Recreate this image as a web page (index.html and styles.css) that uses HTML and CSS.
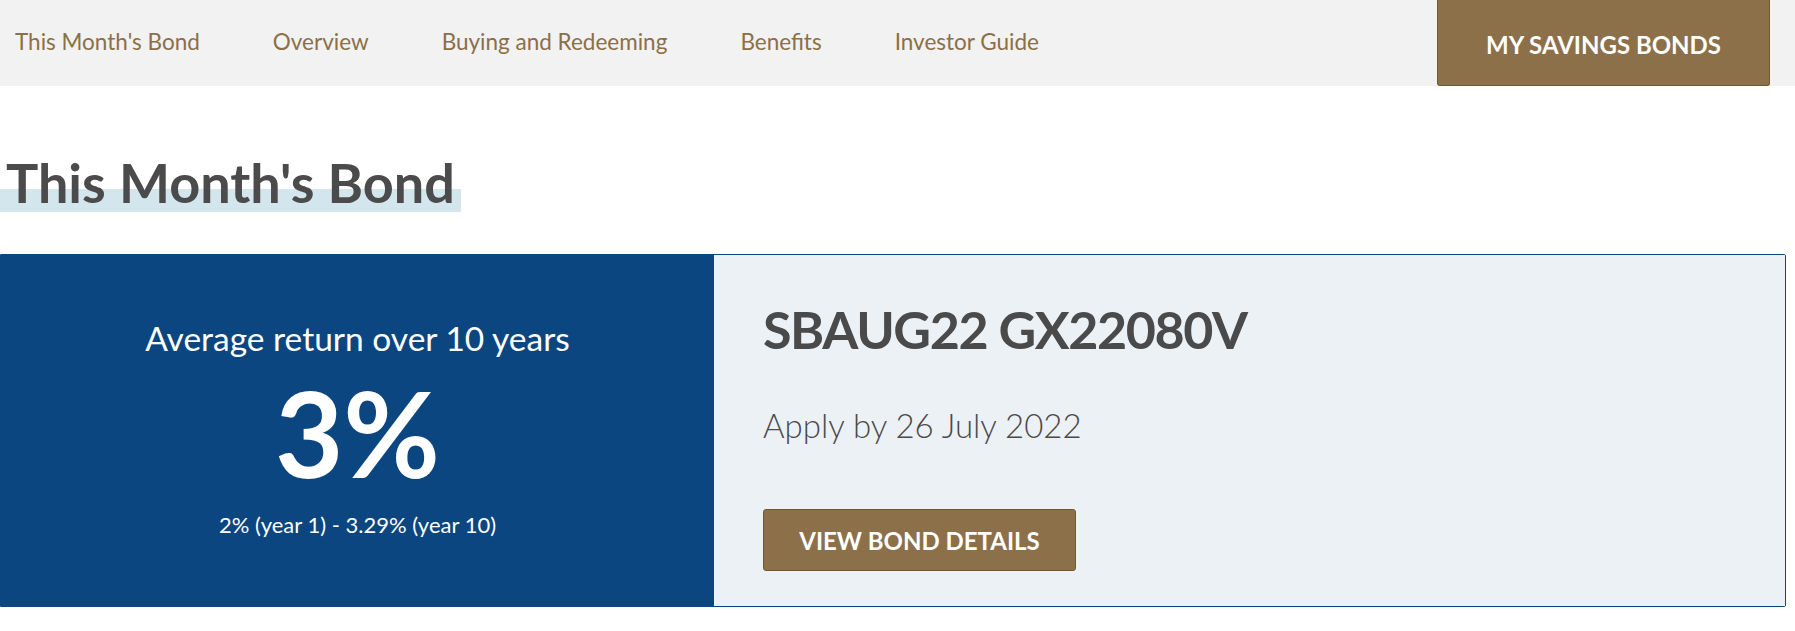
FILE: index.html
```html
<!DOCTYPE html>
<html>
<head>
	<meta charset="utf-8">
	<title>This Month's Bond</title>
	<link rel="stylesheet" href="styles.css">
</head>
<body>
	<div class="topbar">
		<ul class="nav">
			<li><a href="#">This Month's Bond</a></li>
			<li><a href="#">Overview</a></li>
			<li><a href="#">Buying and Redeeming</a></li>
			<li><a href="#">Benefits</a></li>
			<li><a href="#">Investor Guide</a></li>
		</ul>
		<a class="btn btn-top" href="#">MY SAVINGS BONDS</a>
	</div>

	<div class="page">
		<h1 class="title"><span>This Month's Bond</span></h1>

		<div class="bond-card">
			<div class="bond-rate">
				<p class="rate-label">Average return over 10 years</p>
				<p class="rate-value">3%</p>
				<p class="rate-range">2% (year 1) - 3.29% (year 10)</p>
			</div>
			<div class="bond-info">
				<h2 class="bond-name">SBAUG22 GX22080V</h2>
				<p class="bond-date">Apply by 26 July 2022</p>
				<a class="btn btn-details" href="#">VIEW BOND DETAILS</a>
			</div>
		</div>
	</div>
</body>
</html>
```

FILE: styles.css
```css
*{
	margin: 0;
	padding: 0;
	box-sizing: border-box;
}
body{
	font-family: Lato, "Open Sans", sans-serif;
	color: #4a4a4a;
	background: #fff;
}
li{
	list-style: none;
}
a{
	text-decoration: none;
}
.topbar{
	display: flex;
	align-items: stretch;
	justify-content: space-between;
	height: 86px;
	background: #f2f2f2;
	padding-right: 25px;
}
.nav{
	display: flex;
	align-items: center;
	gap: 73px;
	padding-left: 15px;
	padding-bottom: 4px;
}
.nav a{
	color: #8b6f47;
	font-size: 22.5px;
}
.btn{
	display: flex;
	align-items: center;
	justify-content: center;
	background: #8c7049;
	border: 1px solid #6e5935;
	border-radius: 3px;
	color: #fff;
	font-weight: 700;
}
.btn-top{
	width: 333px;
	font-size: 24px;
	border-top: 0;
	border-radius: 0 0 3px 3px;
	padding-top: 4px;
}
.page{
	padding-right: 9px;
}
.title{
	padding-top: 68px;
	line-height: 1;
}
.title span{
	display: inline-block;
	padding: 0 6px 0 6px;
	font-size: 54px;
	font-weight: 700;
	line-height: 58px;
	color: #4b4b4b;
	background: linear-gradient(to bottom, transparent 60%, #d3e6ee 60%);
}
.bond-card{
	display: grid;
	grid-template-columns: 713px 1fr;
	height: 353px;
	margin-top: 42px;
	border: 1px solid #0b4680;
	border-radius: 0 2px 2px 0;
}
.bond-rate{
	display: flex;
	flex-direction: column;
	align-items: center;
	justify-content: center;
	background: #0b4680;
	color: #fff;
	padding-bottom: 6px;
}
.rate-label{
	font-size: 33.5px;
	font-weight: 400;
}
.rate-value{
	font-size: 118px;
	font-weight: 700;
	line-height: 1;
	margin-top: 16px;
}
.rate-range{
	font-size: 22px;
	margin-top: 19px;
}
.bond-info{
	background: #ecf1f6;
	padding: 42px 0 0 49px;
}
.bond-name{
	font-size: 52px;
	font-weight: 700;
	letter-spacing: -1.4px;
	line-height: 64px;
	color: #4a4a4a;
}
.bond-date{
	font-size: 33px;
	font-weight: 300;
	margin-top: 44px;
}
.btn-details{
	width: 313px;
	height: 62px;
	margin-top: 64px;
	font-size: 24px;
}
```
